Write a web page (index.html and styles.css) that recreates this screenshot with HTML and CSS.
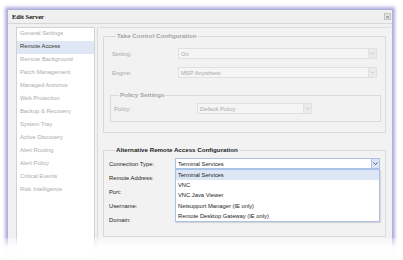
FILE: index.html
```html
<!DOCTYPE html>
<html lang="en">

<head>
    <meta charset="UTF-8">
    <title>Edit Server</title>
    <link rel="stylesheet" href="styles.css">
</head>

<body>
    <div class="screen">
        <div class="dialog">
            <div class="titlebar">
                <span class="title">Edit Server</span>
                <span class="close">&times;</span>
            </div>
            <div class="body">
                <ul class="nav">
                    <li>General Settings</li>
                    <li class="on">Remote Access</li>
                    <li>Remote Background</li>
                    <li>Patch Management</li>
                    <li>Managed Antivirus</li>
                    <li>Web Protection</li>
                    <li>Backup &amp; Recovery</li>
                    <li>System Tray</li>
                    <li>Active Discovery</li>
                    <li>Alert Routing</li>
                    <li>Alert Policy</li>
                    <li>Critical Events</li>
                    <li>Risk Intelligence</li>
                </ul>
                <div class="panel">
                    <fieldset class="group off">
                        <legend>Take Control Configuration</legend>
                        <div class="row">
                            <label>Setting:</label>
                            <div class="select">On<span class="arrow"><svg width="5" height="3" viewBox="0 0 5 3"><path d="M0.5 0.5 L2.5 2.5 L4.5 0.5" fill="none" stroke="#b9c6dc" stroke-width="0.9"/></svg></span></div>
                        </div>
                        <div class="row">
                            <label>Engine:</label>
                            <div class="select">MSP Anywhere<span class="arrow"><svg width="5" height="3" viewBox="0 0 5 3"><path d="M0.5 0.5 L2.5 2.5 L4.5 0.5" fill="none" stroke="#b9c6dc" stroke-width="0.9"/></svg></span></div>
                        </div>
                        <fieldset class="group sub">
                            <legend>Policy Settings</legend>
                            <div class="row">
                                <label class="wide">Policy:</label>
                                <div class="select short">Default Policy<span class="arrow"><svg width="5" height="3" viewBox="0 0 5 3"><path d="M0.5 0.5 L2.5 2.5 L4.5 0.5" fill="none" stroke="#b9c6dc" stroke-width="0.9"/></svg></span></div>
                            </div>
                        </fieldset>
                    </fieldset>

                    <fieldset class="group alt">
                        <legend>Alternative Remote Access Configuration</legend>
                        <div class="row">
                            <label>Connection Type:</label>
                            <div class="select open">Terminal Services<span class="arrow"><svg width="5" height="3" viewBox="0 0 5 3"><path d="M0.5 0.5 L2.5 2.5 L4.5 0.5" fill="none" stroke="#3d4f6e" stroke-width="0.9"/></svg></span>
                                <ul class="options">
                                    <li class="hover">Terminal Services</li>
                                    <li>VNC</li>
                                    <li>VNC Java Viewer</li>
                                    <li>Netsupport Manager (IE only)</li>
                                    <li>Remote Desktop Gateway (IE only)</li>
                                </ul>
                            </div>
                        </div>
                        <div class="row"><label>Remote Address:</label></div>
                        <div class="row"><label>Port:</label></div>
                        <div class="row"><label>Username:</label></div>
                        <div class="row"><label>Domain:</label></div>
                    </fieldset>
                </div>
            </div>
        </div>
        <div class="fade"></div>
    </div>
</body>

</html>
```

FILE: styles.css
```css
 *{
     margin:0;
     padding:0;
     box-sizing:border-box;
 }
 body{
     background:#fff;
     font-family:"Liberation Sans", Arial, sans-serif;
     font-size:5.8px;
     color:#222;
 }
 .screen{
     position:relative;
     width:403px;
     height:260px;
     overflow:hidden;
     padding:9px 0 0 7px;
 }
 .dialog{
     width:386px;
     height:270px;
     background:#f0f0f0;
     border:1px solid #aeaed6;
     box-shadow:0 0 3px 2px rgba(150,150,215,0.75);
 }
 .titlebar{
     display:flex;
     align-items:center;
     justify-content:space-between;
     height:14px;
     padding:0 1px 0 4px;
     border-bottom:1px solid #d6d6d6;
 }
 .title{
     font-family:"Liberation Serif", "Times New Roman", serif;
     font-weight:bold;
     font-size:6.5px;
     color:#111;
 }
 .close{
     display:flex;
     align-items:center;
     justify-content:center;
     width:7px;
     height:7px;
     border:1px solid #c4c4c4;
     background:#e4e4e4;
     color:#666;
     font-size:6px;
     line-height:1;
 }
 .body{
     display:flex;
     gap:2px;
     padding:3px 1px 0 8px;
 }
 .nav{
     list-style:none;
     width:79px;
     height:240px;
     background:#fff;
     border:1px solid #d2d2d2;
 }
 .nav li{
     height:13px;
     line-height:11px;
     padding-left:3px;
     color:#ababab;
 }
 .nav li.on{
     background:#dfe7f4;
     color:#333;
 }
 .panel{
     flex:1;
     height:240px;
     border:1px solid #dcdcdc;
     border-right:none;
     background:#f2f2f2;
     padding:4px 5px 0 5px;
 }
 .group{
     border:1px solid #dadada;
     padding:8px 4px 10px 6px;
 }
 .group legend{
     margin-left:6px;
     padding:0 1px;
     font-size:6.2px;
     font-weight:bold;
     line-height:8px;
     color:#a4a4a4;
 }
 .row{
     display:flex;
     align-items:center;
     height:11px;
     padding:0 4px 0 2px;
     margin-bottom:8px;
 }
 .row label{
     width:66px;
     flex:none;
 }
 .off .row label{
     color:#a8a8a8;
 }
 .select{
     position:relative;
     flex:1;
     display:flex;
     align-items:center;
     height:11px;
     padding-left:2px;
     border:1px solid #e0e0e0;
     background:#f5f5f5;
     color:#a8a8a8;
 }
 .select .arrow{
     position:absolute;
     right:0;
     top:0;
     bottom:0;
     width:8px;
     display:flex;
     align-items:center;
     justify-content:center;
     background:#ebebeb;
     border-left:1px solid #e2e2e2;
 }
 .sub{
     margin:13px 0 0 0;
     padding:4px 0 7px 3px;
 }
 .sub legend{
     margin-left:5px;
 }
 .sub .row{
     margin-bottom:0;
     padding:0;
 }
 .sub .row label{
     width:83px;
 }
 .select.short{
     flex:none;
     width:115px;
 }
 .alt{
     margin-top:13px;
     padding:4px 5px 8px 5px;
 }
 .alt legend{
     color:#222;
 }
 .alt .row{
     padding:0;
     margin-bottom:3px;
 }
 .select.open{
     background:#fff;
     border-color:#a9c2e6;
     color:#222;
 }
 .select.open .arrow{
     background:#dbe5f4;
     border-left-color:#a9c2e6;
 }
 .options{
     list-style:none;
     position:absolute;
     top:10px;
     left:-1px;
     right:-1px;
     background:#fff;
     border:1px solid #a9c2e6;
     box-shadow:0 2px 0 -1px #d4d4d4, 1px 1px 1px #d8d8d8;
     z-index:5;
 }
 .options li{
     height:10.2px;
     line-height:10px;
     padding-left:2px;
 }
 .options li.hover{
     background:#dce6f5;
 }
 .fade{
     position:absolute;
     left:0;
     right:0;
     top:238px;
     height:22px;
     background:linear-gradient(rgba(255,255,255,0.3), rgba(255,255,255,0.93) 40%, #fff);
     z-index:10;
 }
```
